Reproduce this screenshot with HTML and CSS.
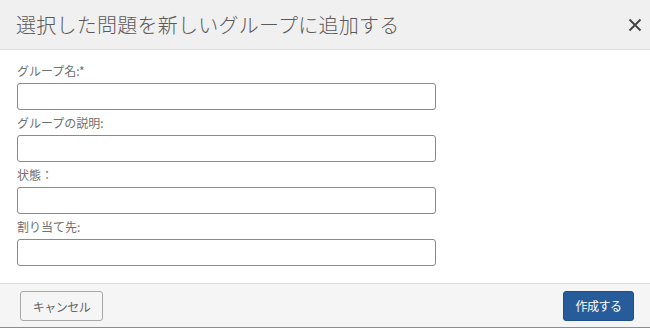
FILE: index.html
```html
<!DOCTYPE html>
<html lang="ja">
<head>
    <meta charset="UTF-8">
    <meta name="viewport" content="width=device-width, initial-scale=1.0">
    <title>選択した問題を新しいグループに追加する</title>
    <link rel="stylesheet" href="styles.css">
</head>
<body>

<div class="dialog">
    <div class="dialog-header">
        <div class="dialog-title">選択した問題を新しいグループに追加する</div>
        <button class="btn-close" aria-label="閉じる">
            <svg width="14" height="14" viewBox="0 0 14 14">
                <path d="M1.5 1.5 L12.5 12.5 M12.5 1.5 L1.5 12.5" stroke="#444" stroke-width="1.9" fill="none"/>
            </svg>
        </button>
    </div>

    <div class="dialog-body">
        <div class="form-group">
            <label for="name">グループ名:*</label>
            <input type="text" id="name">
        </div>
        <div class="form-group">
            <label for="desc">グループの説明:</label>
            <input type="text" id="desc">
        </div>
        <div class="form-group">
            <label for="state">状態：</label>
            <input type="text" id="state">
        </div>
        <div class="form-group">
            <label for="assignee">割り当て先:</label>
            <input type="text" id="assignee">
        </div>
    </div>

    <div class="dialog-footer">
        <button class="btn-cancel">キャンセル</button>
        <button class="btn-create">作成する</button>
    </div>
</div>

</body>
</html>
```

FILE: styles.css
```css
body {
    font-family: "Noto Sans CJK JP", "Noto Sans", sans-serif;
    background-color: #fff;
    color: #555;
    margin: 0;
}
.dialog {
    width: 650px;
    height: 328px;
    box-sizing: border-box;
    display: flex;
    flex-direction: column;
}
.dialog-header {
    height: 49px;
    background-color: #f0f0f0;
    border-bottom: 1px solid #dcdcdc;
    display: flex;
    align-items: center;
    justify-content: space-between;
    padding: 0 8px 0 16px;
}
.dialog-title {
    font-size: 20px;
    font-weight: 300;
    letter-spacing: 0.25px;
    color: #5a5a5a;
    line-height: 24px;
}
.btn-close {
    background: none;
    border: none;
    padding: 0;
    width: 14px;
    height: 14px;
    cursor: pointer;
    display: flex;
}
.dialog-body {
    flex: 1;
    padding: 12px 16px 0 17px;
}
.form-group {
    margin-bottom: 4px;
}
.form-group label {
    display: block;
    font-size: 12px;
    line-height: 17px;
    margin-bottom: 4px;
    color: #707070;
}
.form-group input {
    display: block;
    width: 419px;
    height: 27px;
    box-sizing: border-box;
    border: 1px solid #8a8a8a;
    border-radius: 3px;
    padding: 0 6px;
    font-size: 12px;
    font-family: inherit;
}
.dialog-footer {
    height: 43px;
    background-color: #f5f5f5;
    border-top: 1px solid #dcdcdc;
    border-bottom: 1px solid #8c8c8c;
    display: flex;
    align-items: center;
    justify-content: space-between;
    padding: 0 16px 0 20px;
}
.btn-cancel {
    width: 83px;
    height: 30px;
    background-color: #f5f5f5;
    border: 1px solid #a8a8a8;
    border-radius: 3px;
    color: #666;
    font-family: inherit;
    font-size: 12px;
    letter-spacing: -0.5px;
    cursor: pointer;
    margin-top: 1px;
}
.btn-create {
    width: 71px;
    height: 30px;
    background-color: #275c9b;
    border: 1px solid #1f4f88;
    border-radius: 3px;
    color: #fff;
    font-family: inherit;
    font-size: 12px;
    letter-spacing: -0.5px;
    cursor: pointer;
}
```
